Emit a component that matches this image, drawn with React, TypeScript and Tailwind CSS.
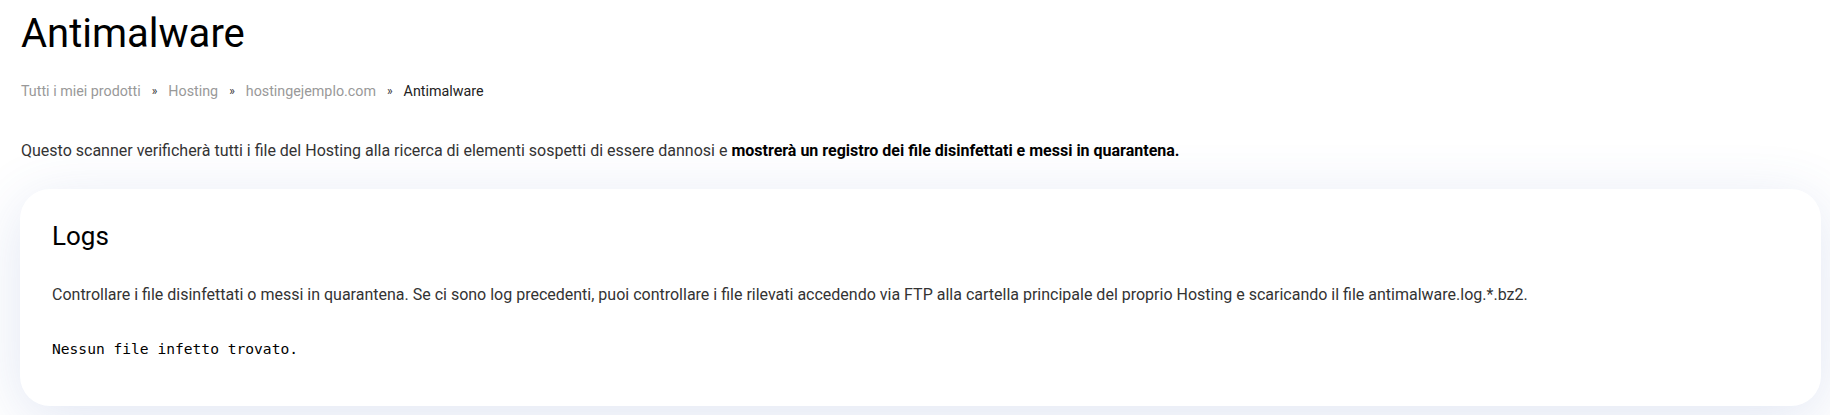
import React from "react";

const crumbs = ["Tutti i miei prodotti", "Hosting", "hostingejemplo.com"];

export default function App() {
    return (
        <div className="min-h-screen w-full bg-white font-['Roboto',sans-serif] text-[#333]">
            <div className="pl-5 pr-[9px] pt-[10px] pb-[9px]">
                <h1 className="pl-[1px] text-[40px] leading-[48px] font-normal text-black">Antimalware</h1>

                {/* breadcrumb */}
                <nav className="mt-[23px] flex items-center pl-[1px] text-[14.3px] leading-5">
                    {crumbs.map((c) => (
                        <React.Fragment key={c}>
                            <span className="text-[#999]">{c}</span>
                            <span className="mx-[11px] text-[12px] text-[#333]">»</span>
                        </React.Fragment>
                    ))}
                    <span className="text-[#222]">Antimalware</span>
                </nav>

                <p className="mt-[38px] pl-[1px] text-[16px] leading-6 text-[#333]">
                    Questo scanner verificherà tutti i file del Hosting alla ricerca di elementi sospetti di essere dannosi e{" "}
                    <strong className="font-bold text-black">mostrerà un registro dei file disinfettati e messi in quarantena.</strong>
                </p>

                <section className="mt-[26px] h-[217px] rounded-[30px] bg-white px-8 pt-[31px] shadow-[0_12px_60px_rgba(70,100,180,0.16)]">
                    <h2 className="text-[26px] leading-8 font-normal text-black">Logs</h2>
                    <p className="mt-[31px] text-[16px] leading-6 text-[#333]">
                        Controllare i file disinfettati o messi in quarantena. Se ci sono log precedenti, puoi controllare i file rilevati accedendo via FTP alla cartella principale del proprio Hosting e scaricando il file antimalware.log.*.bz2.
                    </p>
                    <pre className="mt-[32px] font-['DejaVu_Sans_Mono',monospace] text-[14.6px] leading-5 text-black">Nessun file infetto trovato.</pre>
                </section>
            </div>
        </div>
    );
}
